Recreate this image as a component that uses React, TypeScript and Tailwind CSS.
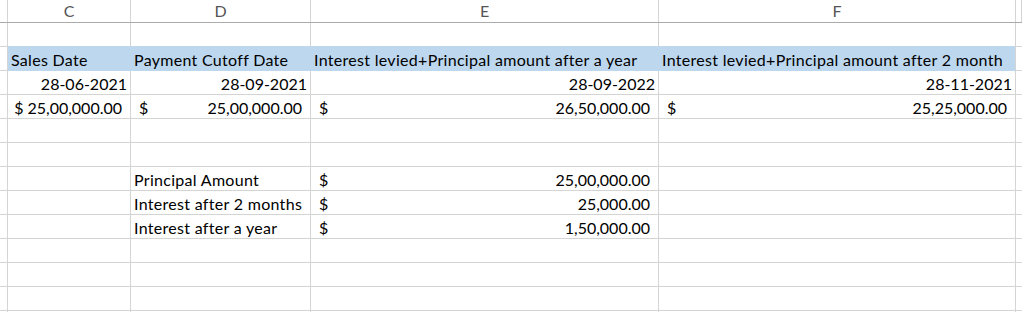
type Cell =
  | { kind: "text"; value: string }
  | { kind: "date"; value: string }
  | { kind: "money"; value: string }
  | { kind: "empty" };

type Row = {
  cells: Cell[];
  blue?: boolean;
};

const columnWidths = ["w-[8px]", "w-[123px]", "w-[180px]", "w-[348px]", "w-[357px]", "flex-1"];
const columnLetters = ["", "C", "D", "E", "F", ""];

const empty: Cell = { kind: "empty" };
const text = (value: string): Cell => ({ kind: "text", value });
const date = (value: string): Cell => ({ kind: "date", value });
const money = (value: string): Cell => ({ kind: "money", value });

const rows: Row[] = [
  { cells: [empty, empty, empty, empty] },
  {
    blue: true,
    cells: [
      text("Sales Date"),
      text("Payment Cutoff Date"),
      text("Interest levied+Principal amount after a year"),
      text("Interest levied+Principal amount after 2 month"),
    ],
  },
  {
    cells: [date("28-06-2021"), date("28-09-2021"), date("28-09-2022"), date("28-11-2021")],
  },
  {
    cells: [money("25,00,000.00"), money("25,00,000.00"), money("26,50,000.00"), money("25,25,000.00")],
  },
  { cells: [empty, empty, empty, empty] },
  { cells: [empty, empty, empty, empty] },
  { cells: [empty, text("Principal Amount"), money("25,00,000.00"), empty] },
  { cells: [empty, text("Interest after 2 months"), money("25,000.00"), empty] },
  { cells: [empty, text("Interest after a year"), money("1,50,000.00"), empty] },
  { cells: [empty, empty, empty, empty] },
  { cells: [empty, empty, empty, empty] },
  { cells: [empty, empty, empty, empty] },
  { cells: [empty, empty, empty, empty] },
];

function CellContent({ cell, narrow }: { cell: Cell; narrow: boolean }) {
  if (cell.kind === "text") {
    return <span className="pl-[3px] whitespace-nowrap tracking-[0.3px]">{cell.value}</span>;
  }

  if (cell.kind === "date") {
    return <span className="ml-auto pr-[3px]">{cell.value}</span>;
  }

  if (cell.kind === "money") {
    // narrow column squeezes the accounting format together
    return (
      <div className={`flex w-full whitespace-nowrap ${narrow ? "justify-end gap-[4px] pr-[8px]" : "justify-between px-[8px]"}`}>
        <span>$</span>
        <span>{cell.value}</span>
      </div>
    );
  }

  return null;
}

export default function App() {
  return (
    <div
      className="h-[312px] w-[1022px] overflow-hidden bg-white text-[16px] text-black"
      style={{ fontFamily: "Lato, 'Liberation Sans', sans-serif" }}
    >
      <div className="flex h-[23px] border-b border-[#ababab]">
        {columnLetters.map((letter, i) => (
          <div
            key={i}
            className={`${columnWidths[i]} flex shrink-0 items-center justify-center border-r border-[#d4d4d4] text-[16px] leading-[22px] text-[#555555]`}
          >
            {letter}
          </div>
        ))}
      </div>

      {rows.map((row, r) => {
        const nextBlue = rows[r + 1]?.blue;
        return (
          <div key={r} className="flex h-[24px]">
            <div className="w-[8px] shrink-0 border-r border-b border-[#d4d4d4]" />
            {row.cells.map((cell, c) => {
              const isLast = c === row.cells.length - 1;
              const rightBorder = row.blue && !isLast ? "border-[#bdd7ee]" : "border-r-[#d4d4d4]";
              const bottomBorder = row.blue || nextBlue ? "border-b-[#bdd7ee]" : "border-b-[#d4d4d4]";
              return (
                <div
                  key={c}
                  className={`${columnWidths[c + 1]} flex shrink-0 items-end overflow-hidden border-r border-b pb-[1px] leading-[19px] ${rightBorder} ${bottomBorder} ${row.blue ? "bg-[#bdd7ee]" : ""}`}
                >
                  <CellContent cell={cell} narrow={c === 0} />
                </div>
              );
            })}
            <div className="flex-1 border-b border-[#d4d4d4]" />
          </div>
        );
      })}
    </div>
  );
}
